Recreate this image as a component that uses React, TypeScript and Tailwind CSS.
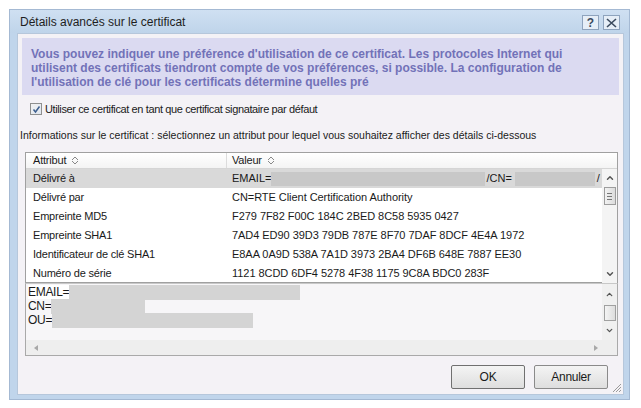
import { ChevronUp, ChevronDown } from 'lucide-react';

const rows: { label: string; value: string }[] = [
  { label: 'Délivré par', value: 'CN=RTE Client Certification Authority' },
  { label: 'Empreinte MD5', value: 'F279 7F82 F00C 184C 2BED 8C58 5935 0427' },
  { label: 'Empreinte SHA1', value: '7AD4 ED90 39D3 79DB 787E 8F70 7DAF 8DCF 4E4A 1972' },
  { label: 'Identificateur de clé SHA1', value: 'E8AA 0A9D 538A 7A1D 3973 2BA4 DF6B 648E 7887 EE30' },
  { label: 'Numéro de série', value: '1121 8CDD 6DF4 5278 4F38 1175 9C8A BDC0 283F' },
];

const SortGlyph = () => (
  <svg width="8" height="9" viewBox="0 0 8 9" className="ml-[5px] inline-block">
    <path d="M1 4 L4 1 L7 4 M1 5 L4 8 L7 5" fill="none" stroke="#7a7a7a" strokeWidth="0.9" />
  </svg>
);

const TitleButton = ({ children }: { children: React.ReactNode }) => (
  <div className="w-[17px] h-[15px] border border-[#8ea3bd] bg-[#e6eef7] flex items-center justify-center text-[12px] font-bold text-[#3b4a5e] leading-none">
    {children}
  </div>
);

export default function App() {
  return (
    <div className="w-[641px] h-[408px] bg-white pt-[9px] pl-[9px] font-['Liberation_Sans',Arial,sans-serif] text-[#1a1a1a]">
      {/* Window frame */}
      <div className="w-[621px] h-[391px] bg-[#c0d5eb] border border-[#a4b9d3] flex flex-col">
        {/* Title bar */}
        <div className="h-[23px] flex items-center pl-[10px] pr-[9px] bg-gradient-to-b from-[#cfe0f2] to-[#bfd4ea]">
          <span className="text-[12px] text-[#1e1e1e]">Détails avancés sur le certificat</span>
          <div className="ml-auto flex gap-[4px] mt-[2px]">
            <TitleButton>?</TitleButton>
            <TitleButton>
              <svg width="11" height="10" viewBox="0 0 11 10">
                <path d="M1 1 L10 9 M10 1 L1 9" stroke="#3b4a5e" strokeWidth="1.6" />
              </svg>
            </TitleButton>
          </div>
        </div>

        {/* Client area */}
        <div className="flex-1 ml-[7px] mr-[5px] mb-[4px] bg-[#f4f2f6] border border-[#b6c7db] flex flex-col pt-[4px]">
          {/* Info band */}
          <div className="mx-[4px] h-[57px] bg-[#dbdaf1] pl-[9px] pt-[9px] text-[12px] leading-[14px] font-bold text-[#7272b8]">
            Vous pouvez indiquer une préférence d'utilisation de ce certificat. Les protocoles Internet qui
            <br />
            utilisent des certificats tiendront compte de vos préférences, si possible. La configuration de
            <br />
            l'utilisation de clé pour les certificats détermine quelles pré
          </div>

          {/* Checkbox */}
          <div className="flex items-center mt-[7px] ml-[12px] h-[14px]">
            <div className="w-[12px] h-[12px] border border-[#8e8f8f] bg-gradient-to-br from-[#f2f2f2] to-[#dfe6ef] flex items-center justify-center">
              <svg width="9" height="9" viewBox="0 0 9 9">
                <path d="M1.5 4.5 L3.5 7 L7.5 1.5" fill="none" stroke="#3d5f8f" strokeWidth="1.5" />
              </svg>
            </div>
            <span className="ml-[3px] text-[11px] tracking-[-0.38px]">Utiliser ce certificat en tant que certificat signataire par défaut</span>
          </div>

          {/* Label */}
          <div className="mt-[13px] ml-[2px] text-[10.5px] leading-[12px]">
            Informations sur le certificat : sélectionnez un attribut pour lequel vous souhaitez afficher des détails ci-dessous
          </div>

          {/* List view */}
          <div className="mt-[11px] ml-[7px] w-[593px] h-[131px] border border-[#a0a0a0] bg-white flex flex-col text-[11px]">
            <div className="h-[16px] flex items-stretch border-b border-[#d5d5d5] bg-gradient-to-b from-white to-[#f4f4f4] shrink-0">
              <div className="w-[201px] pl-[7px] flex items-center border-r border-[#dcdcdc] tracking-[-0.2px]">
                Attribut<SortGlyph />
              </div>
              <div className="flex-1 pl-[5px] flex items-center tracking-[-0.2px]">
                Valeur<SortGlyph />
              </div>
            </div>
            <div className="flex-1 flex">
              <div className="flex-1 flex flex-col">
                <div className="h-[19px] flex items-center bg-[#d9d9d9]">
                  <div className="w-[202px] pl-[7px] tracking-[-0.2px]">Délivré à</div>
                  <div className="flex-1 pl-[4px] flex items-center h-full">
                    <span>EMAIL=</span>
                    <div className="w-[214px] h-[14px] bg-[#c8c8c8]" />
                    <span className="ml-[1px]">/CN=</span>
                    <div className="w-[80px] h-[14px] bg-[#c8c8c8] ml-[3px]" />
                    <span className="ml-[2px]">/</span>
                  </div>
                </div>
                {rows.map((r) => (
                  <div key={r.label} className="h-[19px] flex items-center">
                    <div className="w-[202px] pl-[7px] tracking-[-0.2px]">{r.label}</div>
                    <div className="flex-1 pl-[4px] text-[11px] tracking-[-0.05px]">{r.value}</div>
                  </div>
                ))}
              </div>
              {/* Vertical scrollbar */}
              <div className="w-[15px] bg-[#f4f4f4] flex flex-col items-center">
                <ChevronUp size={10} strokeWidth={3.5} className="text-[#555] mt-[4px]" />
                <div className="w-[12px] h-[18px] mt-[4px] border border-[#9d9d9d] bg-gradient-to-r from-[#f2f2f2] to-[#dcdcdc] flex flex-col items-center justify-center gap-[2px]">
                  <div className="w-[5px] h-px bg-[#777]" />
                  <div className="w-[5px] h-px bg-[#777]" />
                  <div className="w-[5px] h-px bg-[#777]" />
                </div>
                <ChevronDown size={10} strokeWidth={3.5} className="text-[#555] mt-auto mb-[4px]" />
              </div>
            </div>
          </div>

          {/* Detail text box */}
          <div className="ml-[7px] w-[593px] h-[73px] border border-[#a9a9a9] border-t-[#c8c8c8] bg-[#f7f6f8] flex flex-col">
            <div className="flex-1 flex">
              <div className="flex-1 pl-[2px] pt-[1px] text-[12px] leading-[14px]">
                <div className="flex items-center h-[14px]">
                  <span className="bg-white tracking-[-0.3px]">EMAIL=</span>
                  <div className="w-[231px] h-[15px] bg-[#d4d4d4]" />
                </div>
                <div className="flex items-center h-[14px]">
                  <span className="tracking-[-0.3px]">CN=</span>
                  <div className="w-[94px] h-[15px] bg-[#d4d4d4]" />
                </div>
                <div className="flex items-center h-[14px]">
                  <span className="tracking-[-0.3px]">OU=</span>
                  <div className="w-[201px] h-[15px] bg-[#d4d4d4]" />
                </div>
              </div>
              <div className="w-[15px] bg-[#f0f0f0] flex flex-col items-center">
                <ChevronUp size={9} strokeWidth={3.5} className="text-[#555] mt-[6px]" />
                <div className="w-[12px] h-[16px] mt-[6px] border border-[#a0a0a0] bg-gradient-to-r from-[#f4f4f4] to-[#dddddd]" />
                <ChevronDown size={9} strokeWidth={3.5} className="text-[#555] mt-[5px]" />
              </div>
            </div>
            {/* Horizontal scrollbar */}
            <div className="h-[15px] bg-[#eeeeee] flex items-center px-[8px]">
              <svg width="4" height="6" viewBox="0 0 4 6"><path d="M4 0 L0 3 L4 6 Z" fill="#a8a8a8" /></svg>
              <svg width="4" height="6" viewBox="0 0 4 6" className="ml-auto mr-[11px]"><path d="M0 0 L4 3 L0 6 Z" fill="#a8a8a8" /></svg>
            </div>
          </div>

          {/* Buttons */}
          <div className="flex justify-end items-end gap-[9px] mr-[15px] mt-[9px] relative">
            <button className="w-[74px] h-[24px] border border-[#707070] bg-gradient-to-b from-[#f4f4f4] to-[#dedede] text-[12px] tracking-[-0.2px] rounded-[2px]">OK</button>
            <button className="w-[74px] h-[24px] border border-[#8a8a8a] bg-gradient-to-b from-[#f4f4f4] to-[#dedede] text-[12px] tracking-[-0.3px] rounded-[2px]">Annuler</button>
            {/* Resize grip */}
            <svg width="11" height="11" viewBox="0 0 11 11" className="absolute right-[-14px] bottom-[-4px]">
              <path d="M10 2 L2 10 M10 5 L5 10 M10 8 L8 10" stroke="#9a9a9a" strokeWidth="1" />
            </svg>
          </div>
        </div>
      </div>
    </div>
  );
}
